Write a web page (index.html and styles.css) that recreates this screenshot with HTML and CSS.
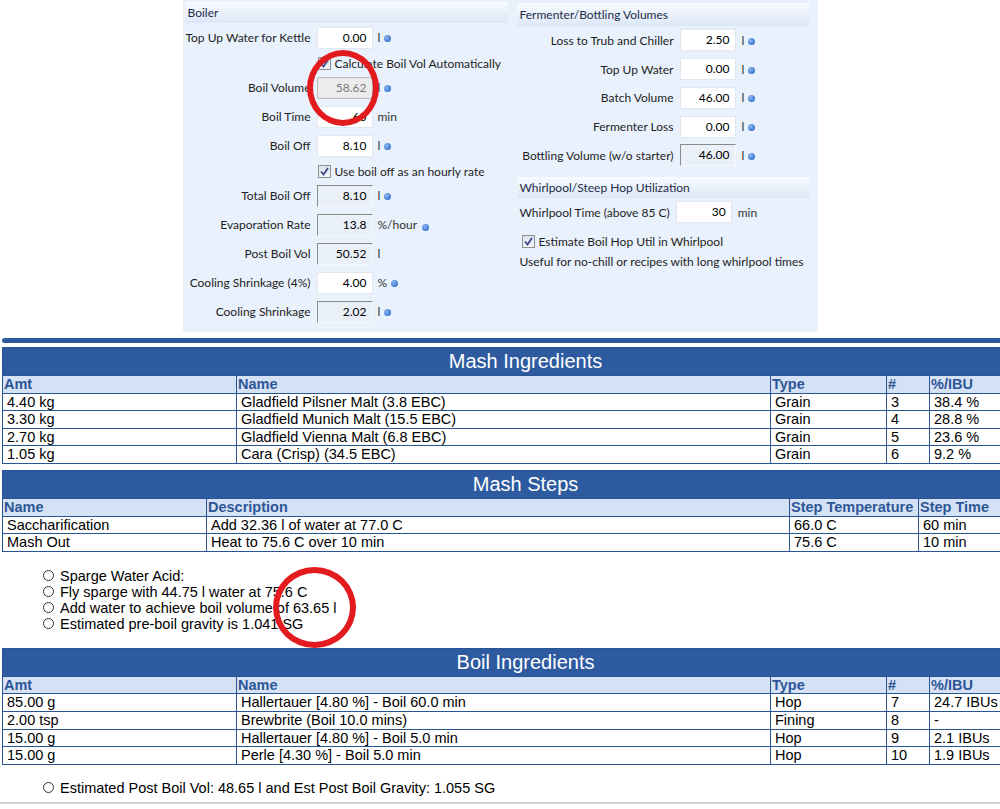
FILE: index.html
```html
<!DOCTYPE html>
<html lang="en">
<head>
    <meta charset="UTF-8">
    <meta name="viewport" content="width=device-width, initial-scale=1.0">
    <title>Brew Day Sheet</title>
    <link rel="stylesheet" href="styles.css">
</head>
<body>
    <!-- Equipment screenshot -->
    <div class="equip">
        <div class="equip-col left">
            <div class="equip-head">Boiler</div>
            <div class="field"><span class="lbl">Top Up Water for Kettle</span><span class="box">0.00</span><span class="unit">l</span><span class="dot"></span></div>
            <div class="cb-row"><span class="check"><svg viewBox="0 0 13 13" width="13" height="13"><path d="M3 6.5 L5.5 9.5 L10 3" fill="none" stroke="#3c4a8c" stroke-width="1.8"/></svg></span>Calculate Boil Vol Automatically</div>
            <div class="field"><span class="lbl">Boil Volume</span><span class="box disabled">58.62</span><span class="unit">l</span><span class="dot"></span></div>
            <div class="field"><span class="lbl">Boil Time</span><span class="box">60</span><span class="unit">min</span></div>
            <div class="field"><span class="lbl">Boil Off</span><span class="box">8.10</span><span class="unit">l</span><span class="dot"></span></div>
            <div class="cb-row"><span class="check"><svg viewBox="0 0 13 13" width="13" height="13"><path d="M3 6.5 L5.5 9.5 L10 3" fill="none" stroke="#3c4a8c" stroke-width="1.8"/></svg></span>Use boil off as an hourly rate</div>
            <div class="field"><span class="lbl">Total Boil Off</span><span class="box readonly">8.10</span><span class="unit">l</span><span class="dot"></span></div>
            <div class="field"><span class="lbl">Evaporation Rate</span><span class="box readonly">13.8</span><span class="unit">%/hour</span><span class="dot low"></span></div>
            <div class="field"><span class="lbl">Post Boil Vol</span><span class="box readonly">50.52</span><span class="unit">l</span></div>
            <div class="field"><span class="lbl">Cooling Shrinkage (4%)</span><span class="box">4.00</span><span class="unit">%</span><span class="dot"></span></div>
            <div class="field"><span class="lbl">Cooling Shrinkage</span><span class="box readonly">2.02</span><span class="unit">l</span><span class="dot"></span></div>
        </div>
        <div class="equip-col right">
            <div class="equip-head">Fermenter/Bottling Volumes</div>
            <div class="field tall"><span class="lbl">Loss to Trub and Chiller</span><span class="box">2.50</span><span class="unit">l</span><span class="dot"></span></div>
            <div class="field tall"><span class="lbl">Top Up Water</span><span class="box">0.00</span><span class="unit">l</span><span class="dot"></span></div>
            <div class="field tall"><span class="lbl">Batch Volume</span><span class="box">46.00</span><span class="unit">l</span><span class="dot"></span></div>
            <div class="field tall"><span class="lbl">Fermenter Loss</span><span class="box">0.00</span><span class="unit">l</span><span class="dot"></span></div>
            <div class="field tall"><span class="lbl">Bottling Volume (w/o starter)</span><span class="box readonly">46.00</span><span class="unit">l</span><span class="dot"></span></div>
            <div class="equip-head second">Whirlpool/Steep Hop Utilization</div>
            <div class="field free"><span class="lbl">Whirlpool Time (above 85 C)</span><span class="box">30</span><span class="unit">min</span></div>
            <div class="cb-row"><span class="check"><svg viewBox="0 0 13 13" width="13" height="13"><path d="M3 6.5 L5.5 9.5 L10 3" fill="none" stroke="#3c4a8c" stroke-width="1.8"/></svg></span>Estimate Boil Hop Util in Whirlpool</div>
            <div class="note">Useful for no-chill or recipes with long whirlpool times</div>
        </div>
    </div>

    <div class="rule-bar"></div>

    <table class="recipe">
        <colgroup><col class="c-amt"><col class="c-name"><col class="c-type"><col class="c-num"><col class="c-pct"></colgroup>
        <tr class="title"><th colspan="5">Mash Ingredients</th></tr>
        <tr class="cols"><th>Amt</th><th>Name</th><th>Type</th><th>#</th><th>%/IBU</th></tr>
        <tr><td>4.40 kg</td><td>Gladfield Pilsner Malt (3.8 EBC)</td><td>Grain</td><td>3</td><td>38.4 %</td></tr>
        <tr><td>3.30 kg</td><td>Gladfield Munich Malt (15.5 EBC)</td><td>Grain</td><td>4</td><td>28.8 %</td></tr>
        <tr><td>2.70 kg</td><td>Gladfield Vienna Malt (6.8 EBC)</td><td>Grain</td><td>5</td><td>23.6 %</td></tr>
        <tr><td>1.05 kg</td><td>Cara (Crisp) (34.5 EBC)</td><td>Grain</td><td>6</td><td>9.2 %</td></tr>
    </table>

    <table class="recipe steps">
        <colgroup><col class="c-step"><col class="c-desc"><col class="c-temp"><col class="c-time"></colgroup>
        <tr class="title"><th colspan="4">Mash Steps</th></tr>
        <tr class="cols"><th>Name</th><th>Description</th><th>Step Temperature</th><th>Step Time</th></tr>
        <tr><td>Saccharification</td><td>Add 32.36 l of water at 77.0 C</td><td>66.0 C</td><td>60 min</td></tr>
        <tr><td>Mash Out</td><td>Heat to 75.6 C over 10 min</td><td>75.6 C</td><td>10 min</td></tr>
    </table>

    <ul class="notes">
        <li><span class="bullet"></span>Sparge Water Acid:</li>
        <li><span class="bullet"></span>Fly sparge with 44.75 l water at 75.6 C</li>
        <li><span class="bullet"></span>Add water to achieve boil volume of 63.65 l</li>
        <li><span class="bullet"></span>Estimated pre-boil gravity is 1.041 SG</li>
    </ul>

    <table class="recipe">
        <colgroup><col class="c-amt"><col class="c-name"><col class="c-type"><col class="c-num"><col class="c-pct"></colgroup>
        <tr class="title"><th colspan="5">Boil Ingredients</th></tr>
        <tr class="cols"><th>Amt</th><th>Name</th><th>Type</th><th>#</th><th>%/IBU</th></tr>
        <tr><td>85.00 g</td><td>Hallertauer [4.80 %] - Boil 60.0 min</td><td>Hop</td><td>7</td><td>24.7 IBUs</td></tr>
        <tr><td>2.00 tsp</td><td>Brewbrite (Boil 10.0 mins)</td><td>Fining</td><td>8</td><td>-</td></tr>
        <tr><td>15.00 g</td><td>Hallertauer [4.80 %] - Boil 5.0 min</td><td>Hop</td><td>9</td><td>2.1 IBUs</td></tr>
        <tr><td>15.00 g</td><td>Perle [4.30 %] - Boil 5.0 min</td><td>Hop</td><td>10</td><td>1.9 IBUs</td></tr>
    </table>

    <ul class="notes last">
        <li><span class="bullet"></span>Estimated Post Boil Vol: 48.65 l and Est Post Boil Gravity: 1.055 SG</li>
    </ul>

    <div class="bottom-rule"></div>

    <!-- red annotation rings -->
    <div class="ring ring-boil"></div>
    <div class="ring ring-sparge"></div>
</body>
</html>
```

FILE: styles.css
```css
html, body {
    overflow: hidden;
}

body {
    margin: 0;
    position: relative;
    background: #fff;
    font-family: "Liberation Sans", Arial, sans-serif;
    color: #000;
}

/* ---- equipment panel ---- */
.equip {
    width: 635px;
    height: 332px;
    margin: 0 auto;
    display: flex;
    background: #e9f1fc;
    font-family: Lato, "Open Sans", sans-serif;
    font-size: 12px;
    color: #1e1e1e;
}

.equip-col.left {
    width: 330px;
}

.equip-col.right {
    width: 305px;
}

.equip-head {
    height: 21px;
    line-height: 21px;
    margin: 2px 5px 0 2px;
    padding-left: 3px;
    background: linear-gradient(#f8fbff, #dce7f7);
    color: #1d2c47;
}

.right .equip-head {
    height: 23px;
    line-height: 23px;
    margin: 3px 9px 0 4px;
}

.right .equip-head.second {
    margin-top: 7px;
    height: 21px;
    line-height: 21px;
}

.field {
    height: 29px;
    display: flex;
    align-items: center;
}

.field.tall {
    height: 28.75px;
}

.field .lbl {
    width: 128px;
    margin-right: 6px;
    text-align: right;
    white-space: nowrap;
}

.right .field .lbl {
    width: 161px;
}

.right .field.free .lbl {
    width: auto;
    margin-left: 7px;
}

.box {
    width: 56px;
    height: 22px;
    box-sizing: border-box;
    line-height: 20px;
    padding-right: 5px;
    text-align: right;
    background: #fff;
    border: 1px solid #dfe7f2;
    color: #000;
}

.box.disabled {
    background: #ececec;
    border: 1px solid #b9b9b9;
    border-radius: 2px;
    color: #7a7a7a;
}

.box.readonly {
    background: #eaf0f8;
    border-top: 1px solid #8a8a8a;
    border-left: 1px solid #8a8a8a;
    border-right: 1px solid #f4f7fb;
    border-bottom: 1px solid #f4f7fb;
}

.unit {
    margin-left: 5px;
    color: #333;
}

.right .unit {
    margin-left: 6px;
}

.dot {
    width: 7px;
    height: 7px;
    margin-left: 4px;
    margin-top: 2px;
    border-radius: 50%;
    background: radial-gradient(circle at 35% 35%, #8fb7f0, #3d77d2 70%);
}

.dot.low {
    margin-top: 6px;
    margin-left: 5px;
}

.cb-row {
    height: 21px;
    display: flex;
    align-items: center;
    padding-left: 135px;
    padding-top: 2px;
    box-sizing: border-box;
    white-space: nowrap;
}

.right .cb-row {
    height: 30px;
    padding-left: 9px;
    padding-top: 0;
}

.check {
    width: 13px;
    height: 13px;
    box-sizing: border-box;
    margin-right: 4px;
    border: 1px solid #8e8f8f;
    background: linear-gradient(#dde3ee, #f3f5f9);
    display: inline-flex;
}

.check svg {
    margin: -1px;
}

.note {
    padding-left: 7px;
    line-height: 14px;
    margin-top: -2px;
}

/* ---- report ---- */
.rule-bar {
    height: 5px;
    margin: 6px 0 4px 2px;
    background: #2d5a9e;
    border-radius: 3px 0 0 3px;
}

.recipe {
    width: 1046px;
    margin-left: 2px;
    border-collapse: collapse;
    table-layout: fixed;
    font-size: 14.5px;
}

.recipe th,
.recipe td {
    border: 1px solid #2a5595;
    padding: 0 0 0 4px;
    line-height: 16.6px;
    text-align: left;
    white-space: nowrap;
    overflow: hidden;
}

.recipe .title th {
    height: 27px;
    padding: 0;
    background: #2e5b9f;
    color: #fff;
    font-size: 20px;
    font-weight: normal;
    text-align: center;
}

.recipe .cols th {
    background: #d5e2f5;
    color: #2d5696;
    padding-left: 1px;
}

.recipe.steps {
    margin-top: 6px;
}

.c-amt { width: 234px; }
.c-name { width: 534px; }
.c-type { width: 116px; }
.c-num { width: 43px; }
.c-pct { width: 119px; }

.c-step { width: 204px; }
.c-desc { width: 583px; }
.c-temp { width: 129px; }
.c-time { width: 130px; }

.notes {
    list-style: none;
    margin: 16px 0;
    padding-left: 43px;
    font-size: 14.5px;
    line-height: 16px;
}

.notes li {
    display: flex;
    align-items: center;
}

.bullet {
    width: 11px;
    height: 11px;
    box-sizing: border-box;
    border: 1px solid #333;
    border-radius: 50%;
    margin-right: 6px;
}

.notes.last {
    margin-top: 15px;
    margin-bottom: 0;
}

.bottom-rule {
    margin-top: 6px;
    border-top: 2px solid #d2d2d2;
}

/* ---- annotations ---- */
.ring {
    position: absolute;
    box-sizing: border-box;
    border: 6px solid #e31b1e;
    border-radius: 50%;
}

.ring-boil {
    left: 307px;
    top: 50px;
    width: 72px;
    height: 76px;
}

.ring-sparge {
    left: 273px;
    top: 567px;
    width: 83px;
    height: 81px;
}
```
